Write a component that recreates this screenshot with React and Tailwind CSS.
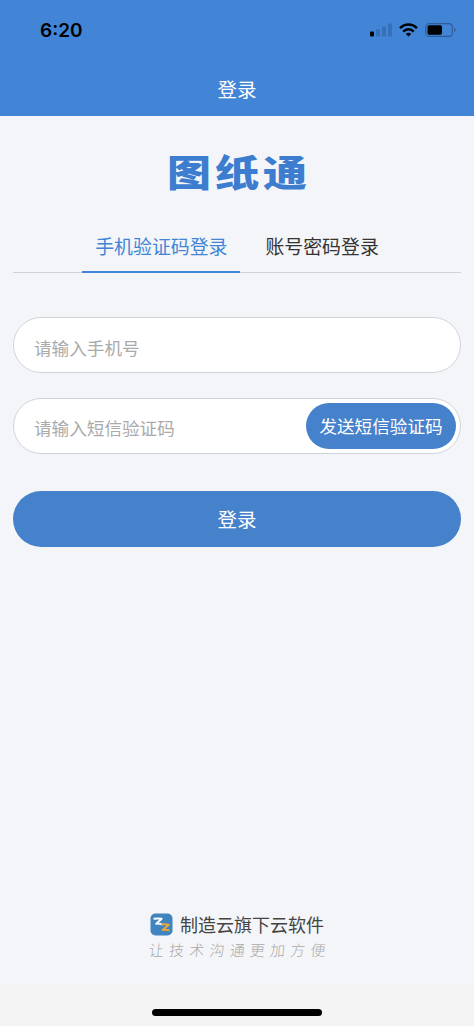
import { useState } from "react"

const tabs = [
  { id: "sms", label: "手机验证码登录" },
  { id: "password", label: "账号密码登录" },
]

function StatusBar() {
  return (
    <div className="flex h-[60px] items-center justify-between pl-10 pr-[18px]">
      <span className="font-[Inter,sans-serif] text-[19px] font-semibold leading-none text-black">6:20</span>
      <div className="flex items-center gap-[7px]">
        <svg width="22" height="14" viewBox="0 0 22 14">
          <rect x="0" y="8.5" width="4" height="5" rx="1" fill="#000" />
          <g fill="#3670b7">
            <rect x="6" y="6" width="4" height="7.5" rx="1" />
            <rect x="12" y="3.5" width="4" height="10" rx="1" />
            <rect x="18" y="0.5" width="4" height="13" rx="1" />
          </g>
        </svg>
        <svg width="19" height="14" viewBox="0 0 19 14" fill="none" stroke="#000" strokeWidth="2.5">
          <path d="M1 5.2C5.8.2 13.200.2 18 5.200" />
          <path d="M4.200 8.600C7.200 5.600 11.800 5.600 14.800 8.600" />
          <path d="M9.500 13.500 6.800 10.900C8.300 9.500 10.700 9.500 12.200 10.900Z" fill="#000" stroke="none" />
        </svg>
        <svg width="31" height="14" viewBox="0 0 31 14">
          <rect x="0.700" y="0.600" width="26.600" height="12.800" rx="3.500" fill="none" stroke="#2d5c96" strokeWidth="1.100" />
          <rect x="2.500" y="2.300" width="14.500" height="9.400" rx="1.700" fill="#000" />
          <path d="M29 4.800c1.900.6 1.900 3.800 0 4.400z" fill="#2d5c96" />
        </svg>
      </div>
    </div>
  )
}

function BrandMark() {
  return (
    <svg width="23" height="23" viewBox="0 0 23 23">
      <rect x="0.500" y="0.500" width="22" height="22" rx="5" fill="#3f83bf" />
      <path d="M3.500 5.700c3-.2 5-.2 8.200 0L6.200 10.800c2.100-.5 4-.1 6.300.7" fill="none" stroke="#fff" strokeWidth="1.900" strokeLinejoin="round" />
      <path d="M11 11.600c3-.5 5-.4 7.800.1L12.600 17c2.700-.7 4.500-.2 7 .4" fill="none" stroke="#e9a83b" strokeWidth="1.900" strokeLinejoin="round" />
    </svg>
  )
}

export default function App() {
  const [activeTab, setActiveTab] = useState("sms")

  return (
    <div className="flex h-[1026px] w-full flex-col bg-[#f4f5f8] font-['Noto_Sans_CJK_SC',sans-serif]">
      <header className="h-[116px] shrink-0 bg-[#4285d6]">
        <StatusBar />
        <h1 className="pt-[14px] text-center text-[19.500px] leading-[29px] text-white">登录</h1>
      </header>

      <main className="flex flex-1 flex-col px-[13px]">
        <div className="mt-[30px] flex h-[50px] items-center justify-center">
          <span className="scale-y-[0.85] pl-1 text-[44px] font-black leading-none tracking-[4px] text-[#3d7dd0]">图纸通</span>
        </div>

        <nav className="mt-[26px] flex h-[51px] justify-center gap-3 border-b border-[#cfd2d7]">
          {tabs.map((tab) => (
            <button
              key={tab.id}
              onClick={() => setActiveTab(tab.id)}
              className={
                activeTab === tab.id
                  ? "-mb-px border-b-2 border-[#4285d6] px-[13px] pb-px text-[18.900px] text-[#4285d6]"
                  : "-mb-px border-b-2 border-transparent px-[13px] pb-px text-[18.900px] text-[#333]"
              }
            >
              {tab.label}
            </button>
          ))}
        </nav>

        <form className="flex flex-col" onSubmit={(e) => e.preventDefault()}>
          <input
            type="tel"
            placeholder="请输入手机号"
            className="mt-[44px] h-[56px] rounded-full border border-[#cfd3da] bg-white px-5 pt-1 text-[17.600px] outline-none placeholder:text-[#aaa]"
          />
          <div className="mt-[25px] flex h-[56px] items-center rounded-full border border-[#cfd3da] bg-white pl-5 pr-[4px]">
            <input
              type="text"
              placeholder="请输入短信验证码"
              className="min-w-0 flex-1 pt-1 text-[17.600px] outline-none placeholder:text-[#aaa]"
            />
            <button type="button" className="h-[46px] w-[150px] shrink-0 rounded-full bg-[#4681cb] text-[17.600px] text-white">
              发送短信验证码
            </button>
          </div>
          <button type="submit" className="mt-[37px] h-[56px] rounded-full bg-[#4681cb] text-[19.500px] text-white">
            登录
          </button>
        </form>

        <footer className="mt-auto flex flex-col items-center pb-[23px]">
          <div className="flex items-center gap-[7px]">
            <BrandMark />
            <span className="text-[18px] leading-6 text-[#444]">制造云旗下云软件</span>
          </div>
          <p className="mt-[3px] -skew-x-6 pl-[5px] text-[15px] font-light leading-[22px] tracking-[5.200px] text-[#aaa]">让技术沟通更加方便</p>
        </footer>
      </main>

      <div className="flex h-[42px] shrink-0 justify-center bg-[#f4f4f4] pt-[25px]">
        <div className="h-[7px] w-[170px] rounded-full bg-black" />
      </div>
    </div>
  )
}
